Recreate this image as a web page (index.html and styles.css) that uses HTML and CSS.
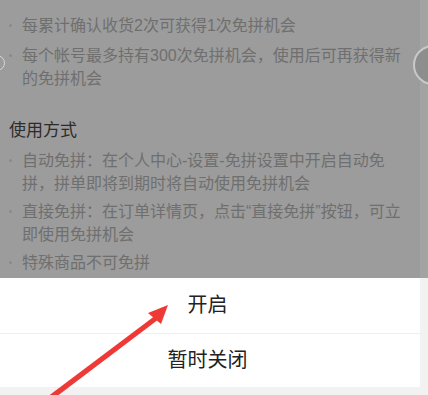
FILE: index.html
```html
<!DOCTYPE html>
<html lang="zh-CN">
<head>
    <meta charset="UTF-8">
    <meta name="viewport" content="width=device-width, initial-scale=1.0">
    <title>免拼设置</title>
    <link rel="stylesheet" href="styles.css">
</head>
<body>
    <div class="screen">
        <div class="page">
            <div class="rules">
                <ul class="list first">
                    <li>每累计确认收货2次可获得1次免拼机会</li>
                    <li>每个帐号最多持有300次免拼机会，使用后可再获得新<br>的免拼机会</li>
                </ul>

                <h3 class="title">使用方式</h3>

                <ul class="list">
                    <li>自动免拼：在个人中心-设置-免拼设置中开启自动免<br>拼，拼单即将到期时将自动使用免拼机会</li>
                    <li>直接免拼：在订单详情页，点击“直接免拼”按钮，可立<br>即使用免拼机会</li>
                    <li>特殊商品不可免拼</li>
                </ul>
            </div>

            <div class="sheet">
                <div class="sheet-btn">开启</div>
                <div class="sheet-btn">暂时关闭</div>
            </div>
        </div>

        <!-- side floating buttons peeking in from the edges -->
        <span class="float-left"></span>
        <span class="float-right"></span>

        <!-- red annotation arrow -->
        <svg class="arrow" width="428" height="395" viewBox="0 0 428 395">
            <path d="M47 397 L156 315 L159 319 L52 400 Z" fill="#ee3a36"/>
            <path d="M168 305 L148 313 L161 324 Z" fill="#ee3a36"/>
        </svg>
    </div>
</body>
</html>
```

FILE: styles.css
```css
body {
    margin: 0;
    font-family: "Noto Sans CJK SC", "Noto Sans", sans-serif;
}

.screen {
    position: relative;
    width: 428px;
    height: 395px;
    overflow: hidden;
    background: linear-gradient(#a3a3a3 0, #a3a3a3 278px, #f2f2f2 278px);
}

.page {
    width: 420px;
    display: flex;
    flex-direction: column;
}

.rules {
    height: 278px;
    box-sizing: border-box;
    padding-top: 13.5px;
    background: #9c9c9c;
}

.list {
    list-style: none;
    margin: 0;
    padding: 0 0 0 22px;
    display: flex;
    flex-direction: column;
    gap: 5px;
    font-family: "Liberation Sans", "Noto Sans CJK TC", sans-serif;
}

.list.first {
    gap: 7px;
}

.list li {
    position: relative;
    font-size: 16px;
    line-height: 23px;
    color: #6f6f6f;
    white-space: nowrap;
}

.list li::before {
    content: "";
    position: absolute;
    left: -13px;
    top: 10px;
    width: 3px;
    height: 3px;
    border-radius: 50%;
    background: #8a8a8a;
}

.title {
    margin: 27.5px 0 7.5px 9px;
    font-size: 17px;
    line-height: 24px;
    font-weight: normal;
    color: #2b2b2b;
}

.sheet {
    background: #fff;
}

.sheet-btn {
    height: 55px;
    box-sizing: border-box;
    padding: 0 5px 4px 0;
    display: flex;
    align-items: center;
    justify-content: center;
    font-size: 20px;
    color: #222;
}

.sheet-btn + .sheet-btn {
    height: 54px;
    border-top: 1px solid #efefef;
}

.float-left {
    position: absolute;
    left: -11px;
    top: 55px;
    width: 14px;
    height: 14px;
    border-radius: 50%;
    border: 1px solid #d4d4d4;
}

.float-right {
    position: absolute;
    left: 413px;
    top: 45px;
    width: 36px;
    height: 36px;
    border-radius: 50%;
    background: #8e8e8e;
    border: 2px solid #c9c9c9;
}

.arrow {
    position: absolute;
    left: 0;
    top: 0;
}
```
